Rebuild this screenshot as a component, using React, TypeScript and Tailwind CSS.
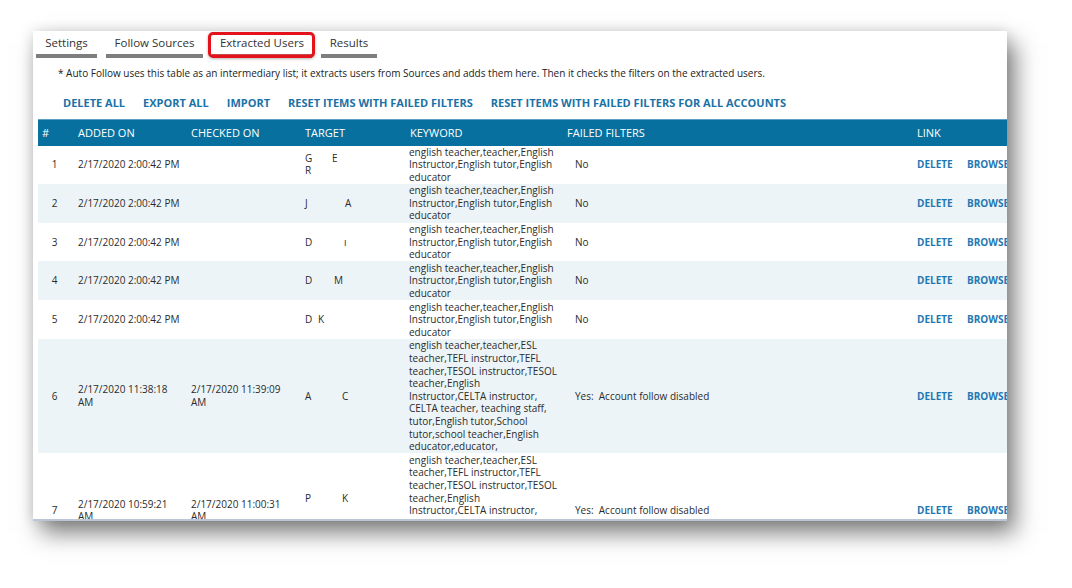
const font = { fontFamily: '"Open Sans", "Noto Sans", "Liberation Sans", sans-serif' }

type Row = {
    n: number
    added: string
    checked: string
    target: [string, number, string, string?]
    keyword: string
    failed: string
    extra?: boolean
}

const shortKw = "english teacher,teacher,English\nInstructor,English tutor,English\neducator"
const longKw =
    "english teacher,teacher,ESL\nteacher,TEFL instructor,TEFL\nteacher,TESOL instructor,TESOL\nteacher,English\nInstructor,CELTA instructor,\nCELTA teacher, teaching staff,\ntutor,English tutor,School\ntutor,school teacher,English\neducator,educator,"

const rows: Row[] = [
    { n: 1, added: "2/17/2020 2:00:42 PM", checked: "", target: ["G", 27, "E", "R"], keyword: shortKw, failed: "No" },
    { n: 2, added: "2/17/2020 2:00:42 PM", checked: "", target: ["J", 40, "A"], keyword: shortKw, failed: "No" },
    { n: 3, added: "2/17/2020 2:00:42 PM", checked: "", target: ["D", 39, "ı"], keyword: shortKw, failed: "No" },
    { n: 4, added: "2/17/2020 2:00:42 PM", checked: "", target: ["D", 29, "M"], keyword: shortKw, failed: "No" },
    { n: 5, added: "2/17/2020 2:00:42 PM", checked: "", target: ["D", 13, "K"], keyword: shortKw, failed: "No" },
    { n: 6, added: "2/17/2020 11:38:18\nAM", checked: "2/17/2020 11:39:09\nAM", target: ["A", 37, "C"], keyword: longKw, failed: "Yes:  Account follow disabled" },
    { n: 7, added: "2/17/2020 10:59:21\nAM", checked: "2/17/2020 11:00:31\nAM", target: ["P", 37, "K"], keyword: longKw, failed: "Yes:  Account follow disabled", extra: true },
]

const tabs = [
    { label: "Settings", w: "w-[61px]" },
    { label: "Follow Sources", w: "w-[97px]" },
    { label: "Extracted Users", w: "w-[100px]", active: true },
    { label: "Results", w: "w-[56px]" },
]

const actions = [
    "DELETE ALL",
    "EXPORT ALL",
    "IMPORT",
    "RESET ITEMS WITH FAILED FILTERS",
    "RESET ITEMS WITH FAILED FILTERS FOR ALL ACCOUNTS",
]

function Target({ t, extra }: { t: Row["target"]; extra?: boolean }) {
    const [a, gap, b, second] = t
    return (
        <div>
            <div className="whitespace-nowrap">
                <span className="inline-block" style={{ width: gap }}>{a}</span>
                {b}
            </div>
            {second && <div>{second}</div>}
            {extra && <div>&nbsp;</div>}
            {extra && <div>&nbsp;</div>}
        </div>
    )
}

export default function App() {
    return (
        <div className="w-[1072px] h-[588px] bg-white pt-[31px] pl-[33px] overflow-hidden" style={font}>
            <div className="w-[974px] h-[490px] bg-white overflow-hidden border-b-2 border-[#bac6d5] shadow-[8px_12px_22px_rgba(0,0,0,0.5),0_0_12px_rgba(0,0,0,0.12)]">
                {/* tabs */}
                <div className="flex pl-[3px] gap-[9px]">
                    {tabs.map((t) => (
                        <div
                            key={t.label}
                            className={`relative ${t.w} h-[27px] leading-[23px] text-center text-[11.5px] text-[#333] border-b-4 ${t.active ? "border-[#c9494b]" : "border-[#7e7e7e]"}`}
                        >
                            {t.label}
                            {t.active && (
                                <div className="absolute left-[-4px] right-[-3px] top-[1px] bottom-[-4px] border-[3px] border-[#e3121b] rounded-[5px] shadow-[0_1px_3px_rgba(0,0,0,0.3)]" />
                            )}
                        </div>
                    ))}
                </div>

                <p className="mt-[8px] pl-[25px] text-[10px] leading-[14px] text-[#222] whitespace-nowrap">
                    * Auto Follow uses this table as an intermediary list; it extracts users from Sources and adds them here. Then it checks the filters on the extracted users.
                </p>

                <div className="mt-[15px] pl-[30px] flex gap-[18px] text-[11px] leading-[16px] font-bold text-[#1b72a6] whitespace-nowrap">
                    {actions.map((a) => (
                        <span key={a}>{a}</span>
                    ))}
                </div>

                <table className="mt-[8px] ml-[5px] table-fixed border-collapse w-[1000px] text-[10px] text-[#2b2b2b]">
                    <colgroup>
                        <col className="w-[33px]" />
                        <col className="w-[113px]" />
                        <col className="w-[114px]" />
                        <col className="w-[105px]" />
                        <col className="w-[157px]" />
                        <col className="w-[350px]" />
                        <col className="w-[128px]" />
                    </colgroup>
                    <thead>
                        <tr className="bg-[#07709e] text-white text-[11px] h-[26px] border-t border-[#5a9fc2] text-left">
                            <th className="pl-[4px] font-normal">#</th>
                            <th className="pl-[7px] font-normal">ADDED ON</th>
                            <th className="pl-[7px] font-normal">CHECKED ON</th>
                            <th className="pl-[7px] font-normal">TARGET</th>
                            <th className="pl-[7px] font-normal">KEYWORD</th>
                            <th className="pl-[7px] font-normal">FAILED FILTERS</th>
                            <th className="pl-[7px] font-normal">LINK</th>
                        </tr>
                    </thead>
                    <tbody className="leading-[12.6px]">
                        {rows.map((r) => (
                            <tr key={r.n} className={`${r.n % 2 === 0 ? "bg-[#edf4f7]" : "bg-white"} border-b border-transparent`}>
                                <td className="text-center align-middle">{r.n}</td>
                                <td className="pl-[7px] align-middle whitespace-pre">{r.added}</td>
                                <td className="pl-[7px] align-middle whitespace-pre">{r.checked}</td>
                                <td className="pl-[7px] align-middle">
                                    <Target t={r.target} extra={r.extra} />
                                </td>
                                <td className="pl-[6px] align-middle whitespace-pre">{r.keyword}</td>
                                <td className="pl-[15px] align-middle whitespace-pre">{r.failed}</td>
                                <td className="pl-[7px] align-middle whitespace-nowrap font-bold text-[10px] text-[#1f78b1]">
                                    <span className="inline-block w-[50px]">DELETE</span>
                                    <span>BROWSE</span>
                                </td>
                            </tr>
                        ))}
                    </tbody>
                </table>
            </div>
        </div>
    )
}
